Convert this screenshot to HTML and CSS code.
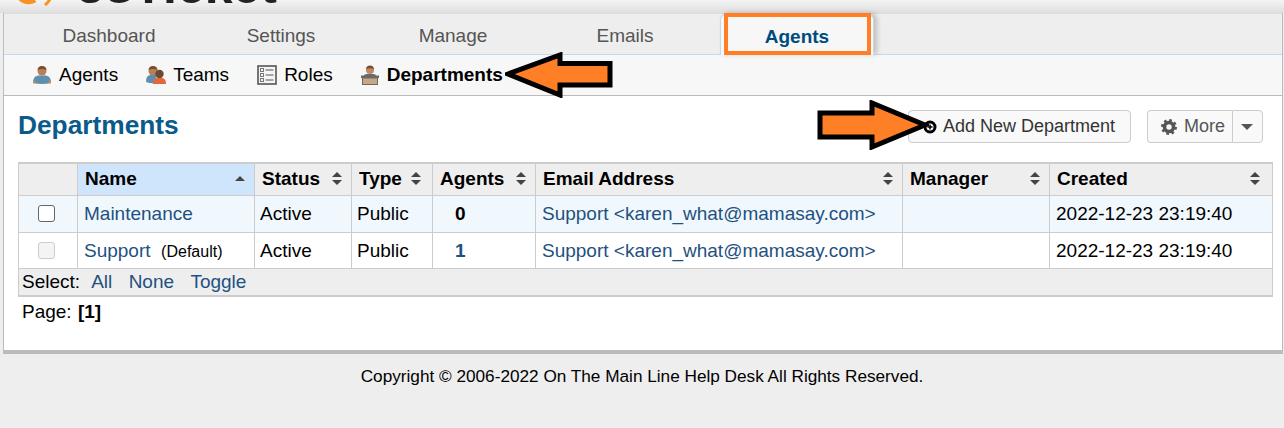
FILE: index.html
```html
<!DOCTYPE html>
<html lang="en">
<head>
  <meta charset="UTF-8" />
  <title>Departments</title>
  <link rel="stylesheet" href="styles.css">
</head>
<body>
  <div class="topbar">
    <div class="logo">
      <svg class="logo-mark" width="40" height="6" viewBox="0 0 40 6"><path d="M3 -4 Q11 5 20 0" fill="none" stroke="#f7931e" stroke-width="5"/><path d="M36 -3 Q34 2 30 5" fill="none" stroke="#f7931e" stroke-width="3"/></svg>
      <span class="logo-text">osTicket</span>
    </div>
  </div>

  <div class="wrap">
    <!-- main tabs -->
    <div class="tabs">
      <a class="tab">Dashboard</a>
      <a class="tab">Settings</a>
      <a class="tab">Manage</a>
      <a class="tab">Emails</a>
      <a class="tab active">Agents</a>
    </div>

    <!-- sub nav -->
    <div class="subnav">
      <a class="sub-item">
        <svg width="20" height="20" viewBox="0 0 20 20"><circle cx="10" cy="6" r="4.5" fill="#b98058"/><path d="M5.5 5 Q6 1 10 1 Q14 1 14.5 5 Q10 3 5.5 5Z" fill="#7a4c2e"/><path d="M1 18 Q1 11 6 10.500 L14 10.500 Q19 11 19 18 Q10 20 1 18Z" fill="#5f8fae"/><circle cx="2.500" cy="17" r="1.500" fill="#c08a62"/><circle cx="17.500" cy="17" r="1.500" fill="#c08a62"/></svg>
        Agents
      </a>
      <a class="sub-item sub-team">
        <svg width="22" height="20" viewBox="0 0 22 20"><circle cx="8" cy="6" r="4.500" fill="#b98058"/><path d="M3.500 5 Q4 1 8 1 Q12 1 12.500 5 Q8 3 3.500 5Z" fill="#7a4c2e"/><path d="M1 17 Q1 10.500 5 10 L11 10 L12 18 Q6 19 1 17Z" fill="#5f8fae"/><circle cx="14.500" cy="9" r="4.200" fill="#6b4a30"/><path d="M8 19 Q8 13.500 12 13 L17 13 Q21 13.500 21 19Z" fill="#e2683a"/></svg>
        Teams
      </a>
      <a class="sub-item">
        <svg width="20" height="20" viewBox="0 0 20 20"><rect x="1" y="1" width="18" height="18" fill="#f4f4f4" stroke="#555" stroke-width="1.600"/><g fill="none" stroke="#777"><rect x="3.500" y="3.500" width="3" height="3"/><rect x="3.500" y="8.500" width="3" height="3"/><rect x="3.500" y="13.500" width="3" height="3"/></g><g stroke="#555" stroke-width="1.200"><path d="M8.500 5H16.500M8.500 10H16.500M8.500 15H16.500"/></g></svg>
        Roles
      </a>
      <a class="sub-item current">
        <svg width="20" height="20" viewBox="0 0 20 20"><circle cx="10" cy="5" r="4" fill="#c08a62"/><path d="M6 4 Q6.500 0.500 10 0.500 Q13.500 0.500 14 4 Q10 2.500 6 4Z" fill="#7a4c2e"/><path d="M4 11 Q4 9 7 9 L13 9 Q16 9 16 11Z" fill="#5f6f78"/><rect x="1" y="10.500" width="18" height="2.500" fill="#6e6a62"/><rect x="2.500" y="13" width="15" height="6.500" fill="#c4a888" stroke="#6e6a62"/></svg>
        Departments
      </a>
    </div>

    <div class="content">
      <div class="title-row">
        <h2 class="page-title">Departments</h2>
        <div class="actions">
          <button class="btn btn-add">
            <svg width="14" height="14" viewBox="0 0 14 14"><circle cx="6" cy="7" r="5" fill="#fff" stroke="#000" stroke-width="3"/><path d="M6 4.500V9.500M3.500 7H8.500" stroke="#000" stroke-width="1.500"/></svg>
            Add New Department
          </button>
          <div class="btn-group">
            <button class="btn btn-more">
              <svg width="16" height="16" viewBox="0 0 16 16"><circle cx="8" cy="8" r="4.500" fill="none" stroke="#555" stroke-width="3.600"/><circle cx="8" cy="8" r="6.800" fill="none" stroke="#555" stroke-width="2.400" stroke-dasharray="2.670 2.670"/></svg>
              More
            </button>
            <button class="btn btn-caret"><span class="caret"></span></button>
          </div>
        </div>
      </div>

      <table class="list">
        <colgroup>
          <col class="c-check"><col class="c-name"><col class="c-status"><col class="c-type"><col class="c-agents"><col class="c-email"><col class="c-manager"><col class="c-created">
        </colgroup>
        <thead>
          <tr>
            <th></th>
            <th class="sorted"><div class="th-in">Name <span class="sort-up"></span></div></th>
            <th><div class="th-in">Status <span class="sort"></span></div></th>
            <th class="th-type"><div class="th-in">Type <span class="sort"></span></div></th>
            <th><div class="th-in">Agents <span class="sort"></span></div></th>
            <th><div class="th-in">Email Address <span class="sort"></span></div></th>
            <th><div class="th-in">Manager <span class="sort"></span></div></th>
            <th class="th-created"><div class="th-in">Created <span class="sort"></span></div></th>
          </tr>
        </thead>
        <tbody>
          <tr class="hl">
            <td class="check"><span class="box"></span></td>
            <td><a>Maintenance</a></td>
            <td class="tight">Active</td>
            <td class="tight">Public</td>
            <td class="num"><b>0</b></td>
            <td><a>Support &lt;karen_what@mamasay.com&gt;</a></td>
            <td></td>
            <td>2022-12-23 23:19:40</td>
          </tr>
          <tr>
            <td class="check"><span class="box off"></span></td>
            <td><a>Support</a>&nbsp; <small>(Default)</small></td>
            <td class="tight">Active</td>
            <td class="tight">Public</td>
            <td class="num"><a><b>1</b></a></td>
            <td><a>Support &lt;karen_what@mamasay.com&gt;</a></td>
            <td></td>
            <td>2022-12-23 23:19:40</td>
          </tr>
        </tbody>
        <tfoot>
          <tr>
            <td colspan="8">Select:&nbsp; <a>All</a> &nbsp; <a>None</a> &nbsp; <a>Toggle</a></td>
          </tr>
        </tfoot>
      </table>
      <div class="pager">Page: <b>[1]</b></div>
    </div>
  </div>

  <div class="footer">Copyright © 2006-2022 On The Main Line Help Desk All Rights Reserved.</div>

  <!-- orange annotations drawn over the screenshot -->
  <div class="mark-box"></div>
  <svg class="arrow arrow-left" width="110" height="46" viewBox="0 0 110 46"><path d="M3 22 L55 3 V11.500 H105 V33 H55 V43 Z" fill="#fe7f26" stroke="#000" stroke-width="5"/></svg>
  <svg class="arrow arrow-right" width="112" height="50" viewBox="0 0 112 50"><path d="M3 13 H55 V3 L108 25 L55 47 V37 H3 Z" fill="#fe7f26" stroke="#000" stroke-width="5"/></svg>
</body>
</html>
```
FILE: styles.css
```css
html, body {
  height: 428px;
  overflow: hidden;
}

body {
  margin: 0;
  font-family: "Liberation Sans", Arial, sans-serif;
  font-size: 19px;
  background-color: #eeeeee;
  color: #000;
  position: relative;
}

a {
  color: #1f5180;
  text-decoration: none;
}

.topbar {
  height: 13px;
  overflow: hidden;
  background: linear-gradient(#f4f4f4, #dedede);
  padding-left: 15px;
}

.logo {
  display: flex;
  align-items: flex-start;
  gap: 20px;
}

.logo-mark {
  flex: none;
}

.logo-text {
  font-size: 50px;
  line-height: 50px;
  font-weight: bold;
  color: #222;
  margin-top: -39px;
}

.wrap {
  margin: 0 1px 0 3px;
  border: 1px solid #bbbbbb;
  border-width: 0 1px 4px 1px;
  background-color: #fff;
  height: 337px;
}

.tabs {
  display: flex;
  gap: 24px;
  height: 40px;
  padding-left: 31px;
  background-color: #eeeeee;
  border-top: 1px solid #dddddd;
  border-bottom: 1px solid #c5d9ec;
}

.tab {
  width: 148px;
  line-height: 44px;
  text-align: center;
  color: #555;
  margin-bottom: -1px;
}

.tab.active {
  width: 154px;
  margin-left: -3px;
  margin-right: -3px;
  font-weight: bold;
  color: #004a80;
  background-color: #f7f7f7;
  border: 1px solid #c5d9ec;
  border-bottom: none;
  border-radius: 6px 6px 0 0;
  box-shadow: 3px -1px 5px rgba(0, 0, 0, 0.2);
  box-sizing: border-box;
}

.subnav {
  display: flex;
  align-items: center;
  height: 40px;
  padding-left: 28px;
  gap: 27px;
  background-color: #f7f7f7;
  border-bottom: 1px solid #bbbbbb;
}

.sub-item {
  display: flex;
  align-items: center;
  gap: 7px;
  color: #000;
}

.sub-team {
  margin-right: 1px;
}

.sub-team svg {
  margin-right: -1px;
}

.sub-item.current {
  font-weight: bold;
}

.content {
  padding: 14px 9px 0 14px;
}

.title-row {
  display: flex;
  justify-content: space-between;
  align-items: center;
  height: 33px;
  padding-right: 10px;
}

.page-title {
  margin: -3px 0 0 0;
  font-size: 26.300px;
  color: #0a5a8a;
}

.actions {
  display: flex;
  gap: 16px;
}

.btn {
  font-family: inherit;
  font-size: 18px;
  height: 33px;
  padding: 0 14px;
  border: 1px solid #cccccc;
  border-radius: 4px;
  background-color: #f9f9f9;
  color: #333;
  display: flex;
  align-items: center;
  gap: 5px;
}

.btn svg {
  flex: none;
}

.btn-add {
  width: 223px;
  padding-left: 15px;
}

.btn-group {
  display: flex;
}

.btn-more {
  width: 85px;
  padding: 0 0 0 13px;
  color: #555;
  border-radius: 4px 0 0 4px;
  border-right: none;
  gap: 7px;
}

.btn-caret {
  width: 31px;
  padding: 0 0 0 8px;
  border-radius: 0 4px 4px 0;
}

.caret {
  border-left: 6px solid transparent;
  border-right: 6px solid transparent;
  border-top: 6px solid #555;
}

.list {
  width: 1254px;
  margin-top: 19px;
  border-collapse: collapse;
  table-layout: fixed;
  border: 2px solid #cccccc;
  border-width: 2px 1px 2px 1px;
}

.c-check { width: 59px; }
.c-name { width: 177px; }
.c-status { width: 97px; }
.c-type { width: 81px; }
.c-agents { width: 103px; }
.c-email { width: 367px; }
.c-manager { width: 147px; }
.c-created { width: 223px; }

.list th,
.list td {
  border: 1px solid #cccccc;
  padding: 0 6px;
  height: 35px;
  white-space: nowrap;
  text-align: left;
}

.list td.tight {
  padding-left: 5px;
}

.list th {
  height: 29px;
  background-color: #eeeeee;
  padding: 0 9px 2px 7px;
}

.list th.sorted {
  background-color: #cfe5fb;
  padding-right: 7px;
}

.list th.th-type {
  padding-right: 11px;
}

.list th.th-created {
  padding-right: 12px;
}

.th-in {
  display: flex;
  justify-content: space-between;
  align-items: center;
}

.sort,
.sort-up {
  display: block;
  width: 10px;
  height: 13px;
  position: relative;
}

.sort::before,
.sort::after,
.sort-up::before {
  content: "";
  position: absolute;
  left: 0;
  border-left: 5px solid transparent;
  border-right: 5px solid transparent;
}

.sort::before,
.sort-up::before {
  top: 0;
  border-bottom: 5px solid #444;
}

.sort::after {
  bottom: 0;
  border-top: 5px solid #444;
}

.sort-up {
  margin-right: 2px;
}

.sort-up::before {
  top: 4px;
}

.list .hl td {
  height: 36px;
  background-color: #f0f8fe;
}

.list .check {
  text-align: center;
  padding: 0 4px 0 0;
}

.box {
  display: inline-block;
  width: 15px;
  height: 15px;
  margin-top: -2px;
  border: 1px solid #666;
  border-radius: 3px;
  background-color: #fff;
  vertical-align: middle;
}

.box.off {
  border-color: #ccc;
  background-color: #f4f4f4;
}

.list .num {
  padding-left: 22px;
}

.list small {
  font-size: 16px;
}

.list tfoot td {
  height: 26px;
  background-color: #eeeeee;
  padding: 0 3px;
}

.list tfoot a {
  margin-left: 0.5px;
}

.pager {
  margin: 4px 0 0 4px;
}

.pager b {
  margin-left: 1px;
}

.footer {
  text-align: center;
  font-size: 17.200px;
  margin-top: 12px;
}

.mark-box {
  position: absolute;
  left: 724px;
  top: 13px;
  width: 147px;
  height: 42px;
  border: 4px solid #fe7f26;
  box-sizing: border-box;
}

.arrow {
  position: absolute;
}

.arrow-left {
  left: 505px;
  top: 52px;
}

.arrow-right {
  left: 817px;
  top: 100px;
}
```
